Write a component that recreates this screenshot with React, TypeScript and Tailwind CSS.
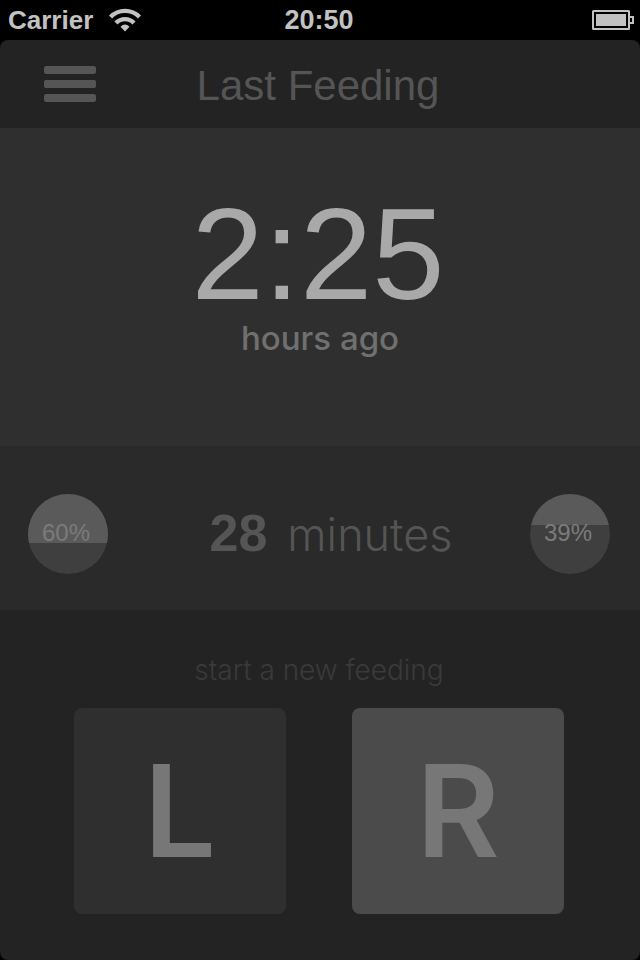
import React from 'react';

function WifiIcon() {
  return (
    <svg width="32" height="24" viewBox="0 0 32 24" fill="none" stroke="#c2c2c2" strokeWidth="4.4" aria-hidden="true">
      <path d="M1.5 9C9.500 .8 22.500 .8 30.500 9" />
      <path d="M7 15C12 9.800 20 9.800 25 15" />
      <path d="M16 23.500L11.500 18.800Q16 14 20.500 18.800Z" fill="#c2c2c2" stroke="none" />
    </svg>
  );
}

function BatteryIcon() {
  return (
    <svg width="42" height="20" viewBox="0 0 42 20" aria-hidden="true">
      <rect x="1" y="1" width="36" height="18" rx="0.500" fill="none" stroke="#c2c2c2" strokeWidth="2" />
      <rect x="4" y="4" width="30" height="12" fill="#c2c2c2" />
      <path d="M38 7H41V13H38" fill="none" stroke="#c2c2c2" strokeWidth="2" />
    </svg>
  );
}

function StatusBar() {
  return (
    <div className="grid h-10 grid-cols-3 items-center bg-black pl-2 pr-1.5 font-bold text-[#c2c2c2]">
      <div className="flex items-center gap-4 text-[26px]/[40px]">
        <span>Carrier</span>
        <WifiIcon />
      </div>
      <time className="pr-1 text-center text-[27px]/[40px]">20:50</time>
      <div className="flex justify-end">
        <BatteryIcon />
      </div>
    </div>
  );
}

function Share({ percent, fill }: { percent: number; fill: number }) {
  return (
    <div className="relative size-20 overflow-hidden rounded-full bg-[#3f3f3f]">
      <div className="bg-[#5a5a5a]" style={{ height: `${fill}%` }} />
      <span className="absolute inset-0 pr-1 text-center text-[24px]/[78px] text-[#7b7b7b]">{percent}%</span>
    </div>
  );
}

export default function App() {
  return (
    <div className="flex min-h-screen flex-col bg-black font-['Liberation_Sans',Arial,sans-serif]">
      <StatusBar />
      <main className="flex flex-1 flex-col overflow-hidden rounded-lg bg-[#232323]">
        <header className="grid h-22 grid-cols-[96px_1fr_96px] items-center">
          <button type="button" aria-label="Menu" className="ml-11 flex w-13 flex-col gap-1.5">
            <span className="h-2 w-full rounded-xs bg-[#555555]" />
            <span className="h-2 w-full rounded-xs bg-[#555555]" />
            <span className="h-2 w-full rounded-xs bg-[#555555]" />
          </button>
          <h1 className="pr-1 pt-1 text-center text-[42px]/[84px] text-[#555555]">Last Feeding</h1>
        </header>

        <section className="h-[318px] bg-[#2f2f2f] pt-14 text-center">
          <p className="pr-1 text-[130px]/[140px] text-[#a9a9a9]">2:25</p>
          <p className="font-[Inter,sans-serif] text-[33px]/[28px] font-medium text-[#707070]">hours ago</p>
        </section>

        <section className="flex h-41 items-center bg-[#2a2a2a] pl-7 pr-[30px] pt-3">
          <Share percent={60} fill={61} />
          <p className="flex flex-1 items-baseline justify-center gap-5 pl-6 text-[#555555]">
            <strong className="text-[52px]/[62px]">28</strong>
            <span className="font-[Inter,sans-serif] text-[45px]/[62px] font-light">minutes</span>
          </p>
          <Share percent={39} fill={39} />
        </section>

        <section className="flex-1 pr-0.5 pt-10 text-center">
          <h2 className="font-[Inter,sans-serif] text-[28px]/[40px] font-light text-[#3a3a3a]">start a new feeding</h2>
          <div className="mt-[18px] flex justify-center gap-[66px] font-[Inter,sans-serif] text-[128px]/[206px] font-semibold text-[#777777]">
            <button type="button" className="w-[212px] rounded-lg bg-[#2f2f2f]">L</button>
            <button type="button" className="w-[212px] rounded-lg bg-[#4b4b4b]">R</button>
          </div>
        </section>
      </main>
    </div>
  );
}
